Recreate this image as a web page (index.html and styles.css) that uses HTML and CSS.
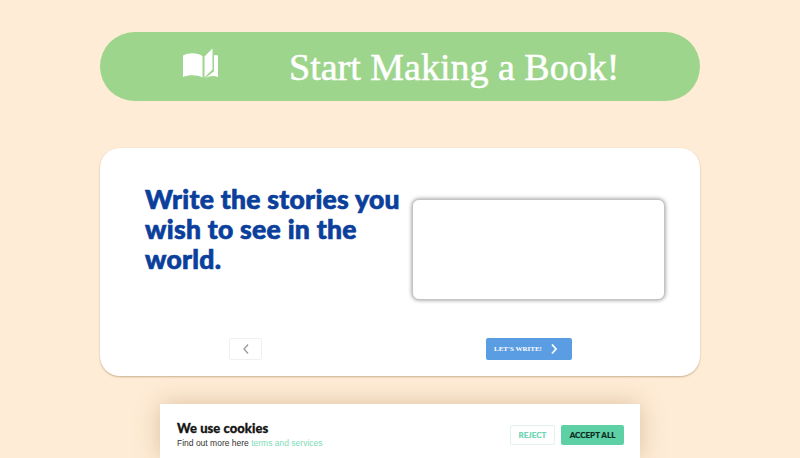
FILE: index.html
```html
<!DOCTYPE html>
<html lang="en">
<head>
<meta charset="utf-8">
<title>Start Making a Book</title>
<link rel="stylesheet" href="styles.css">
</head>
<body>
<main class="page">
  <div class="hero">
    <svg class="hero-icon" viewBox="0 0 35 31" aria-hidden="true">
      <path d="M0 7.500C6 4.500 14 4.500 19.500 8V29.500C14 26.500 6 26.500 0 29Z" fill="#fff"/>
      <path d="M21.500 8.500 29.500 0.500V21.500L21.500 29.500Z" fill="#fff"/>
      <path d="M31 7h1.500C33.300 7 34.200 7.200 35 7.500V29C30.500 27.500 26 27.700 21.500 30.800L31 23.200Z" fill="#fff"/>
    </svg>
    <h1 class="hero-title">Start Making a Book!</h1>
  </div>
  <section class="card">
    <div class="card-top">
      <h2 class="headline">Write the stories you wish to see in the world.</h2>
      <div class="textbox"></div>
    </div>
    <div class="card-nav">
      <button class="btn-back" type="button" aria-label="Back">
        <svg class="chev" viewBox="0 0 8 12"><path d="M6 1.500 2 6l4 4.500" fill="none" stroke="#9a9a9a" stroke-width="1.300"/></svg>
      </button>
      <button class="btn-next" type="button">
        <span>LET'S WRITE!</span>
        <svg class="chev" viewBox="0 0 8 12"><path d="M2 1.500 6 6l-4 4.500" fill="none" stroke="#fff" stroke-width="1.800"/></svg>
      </button>
    </div>
  </section>
  <aside class="cookie">
    <div class="cookie-text">
      <strong class="cookie-title">We use cookies</strong>
      <p class="cookie-sub">Find out more here <a href="#" class="cookie-link">terms and services</a></p>
    </div>
    <div class="cookie-actions">
      <button class="btn-reject" type="button">REJECT</button>
      <button class="btn-accept" type="button">ACCEPT ALL</button>
    </div>
  </aside>
</main>
</body>
</html>
```

FILE: styles.css
```css
* { box-sizing: border-box; }
html, body { margin: 0; height: 458px; overflow: hidden; }
body { background: #ffecd6; font-family: "Lato", sans-serif; }
.page { display: flex; flex-direction: column; align-items: center; padding-top: 32px; }
.hero {
  width: 600px; height: 69px; border-radius: 35px; background: #9dd58c;
  display: flex; align-items: center; padding-left: 83px; gap: 71px;
}
.hero-icon { width: 35px; height: 31px; margin-bottom: 7px; }
.hero-title {
  margin: 0; font-family: "Liberation Serif", serif; font-weight: 400; font-size: 38px;
  color: #fff; white-space: nowrap; -webkit-text-stroke: .5px #fff;
}
.card {
  width: 600px; height: 228px; margin-top: 47px; background: #fff; border-radius: 20px;
  box-shadow: 0 1px 2px rgba(130, 100, 60, .45);
  display: flex; flex-direction: column;
}
.card-top { display: flex; padding: 36px 35px 0 45px; height: 190px; justify-content: space-between; }
.headline {
  margin: 0; width: 262px; font-size: 26.500px; line-height: 30px; font-weight: 900; color: #0b3f9c;
  letter-spacing: .28px; -webkit-text-stroke: .7px #0b3f9c;
}
.textbox {
  width: 253px; height: 101px; margin-top: 15px; border-radius: 7px; background: #fff;
  border: 1px solid #c4c4c4; box-shadow: 0 0 4px rgba(0, 0, 0, .45);
}
.card-nav { display: flex; padding-left: 129px; gap: 223px; }
.btn-back {
  width: 33px; height: 22px; background: #fff; border: 1px solid #f0f0f0; border-radius: 2px;
  display: flex; align-items: center; justify-content: center; padding: 0; margin-right: 1px;
}
.btn-next {
  width: 86px; height: 22px; background: #5b9de3; border: 0; border-radius: 2px; color: #fff;
  display: flex; align-items: center; padding: 0 0 0 8px; gap: 8px;
  font-family: "Liberation Serif", serif; font-weight: 700; font-size: 7px;
}
.chev { width: 8px; height: 12px; }
.cookie {
  width: 480px; height: 54px; margin-top: 28px; background: #fff;
  box-shadow: 0 0 24px rgba(150, 110, 60, .35);
  display: flex; justify-content: space-between; padding: 16px 16px 0 17px;
}
.cookie-title { display: block; font-size: 13px; font-weight: 900; color: #151515; line-height: 16px; letter-spacing: .05px; -webkit-text-stroke: .3px #151515; }
.cookie-sub { margin: 1px 0 0; font-family: "Liberation Sans", sans-serif; font-size: 8.500px; color: #333; line-height: 12px; }
.cookie-link { color: #7fdcb8; text-decoration: none; }
.cookie-actions { display: flex; gap: 6px; height: 20px; margin-top: 5px; }
.btn-reject, .btn-accept { font-family: "Lato", sans-serif; font-size: 8px; font-weight: 900; border-radius: 2px; padding: 0; height: 20px; -webkit-text-stroke: .15px currentColor; }
.btn-reject { width: 45px; background: #fff; border: 1px solid #e2f3ee; color: #6fd5b2; }
.btn-accept { width: 63px; background: #5dd0a6; border: 0; color: #0c2a20; }
```
